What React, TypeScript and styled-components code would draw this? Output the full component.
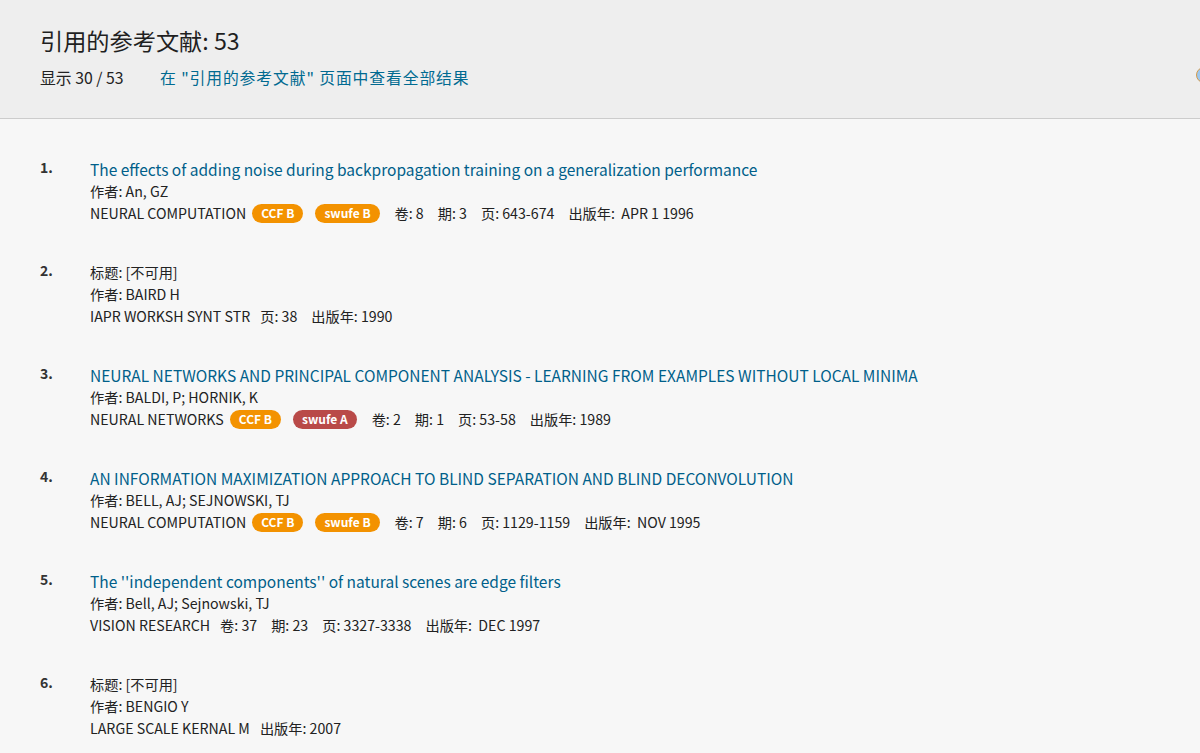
import React from "react";
import styled, { createGlobalStyle } from "styled-components";

const Global = createGlobalStyle`
  html, body { margin: 0; padding: 0; background: #f7f7f7; overflow: hidden; }
  body { font-family: "Noto Sans CJK SC", "Noto Sans", sans-serif; color: #222; }
`;

const Header = styled.header`
  position: relative;
  background: #eeeeee;
  border-bottom: 1px solid #cccccc;
  padding: 25px 40px 0;
  height: 119px;
  box-sizing: border-box;
`;

const Title = styled.h1`
  margin: 0;
  font-size: 23.2px;
  font-weight: 400;
  line-height: 30px;
  color: #1f1f1f;
`;

const SubRow = styled.div`
  display: flex;
  align-items: center;
  margin-top: 12px;
  font-size: 15.8px;
  line-height: 22px;
`;

const Count = styled.span`
  color: #222;
  width: 120px;
`;

const Link = styled.a`
  color: #006a91;
  text-decoration: none;
  cursor: pointer;
  letter-spacing: 0.9px;
`;

const EdgeIcon = styled.span`
  position: absolute;
  right: -12px;
  top: 67px;
  width: 14px;
  height: 14px;
  border-radius: 50%;
  border: 1px solid #d49a4a;
  background: #9cc8f0;
`;

const List = styled.ol`
  list-style: none;
  margin: 0;
  padding: 39px 40px 0;
  display: flex;
  flex-direction: column;
  gap: 37px;
`;

const Item = styled.li`
  display: grid;
  grid-template-columns: 50px 1fr;
`;

const Num = styled.span`
  font-size: 14px;
  font-weight: 700;
  color: #333;
  line-height: 18px;
`;

const Body = styled.div`
  display: flex;
  flex-direction: column;
`;

const RefTitle = styled.a`
  font-size: 15.5px;
  line-height: 22px;
  color: #005f8a;
  text-decoration: none;
  cursor: pointer;
`;

const Line = styled.div`
  display: flex;
  align-items: center;
  font-size: 14.2px;
  line-height: 22px;
  color: #222;
  white-space: pre;
`;

const Badge = styled.span<{ $tone: "orange" | "red" }>`
  display: inline-flex;
  align-items: center;
  justify-content: center;
  height: 19px;
  padding: 0 9px;
  border-radius: 10px;
  background: ${(p) => (p.$tone === "red" ? "#b94a48" : "#f39200")};
  color: #fff;
  font-size: 12px;
  font-weight: 700;
  margin-left: 6px;
  & + & { margin-left: 12px; }
`;

const Field = styled.span<{ $gap: number }>`
  margin-left: ${(p) => p.$gap}px;
`;

type Ref = {
  title?: string;
  authors: string;
  journal: string;
  badges?: { text: string; tone: "orange" | "red" }[];
  fields: string[];
};

const refs: Ref[] = [
  {
    title: "The effects of adding noise during backpropagation training on a generalization performance",
    authors: "An, GZ",
    journal: "NEURAL COMPUTATION",
    badges: [
      { text: "CCF B", tone: "orange" },
      { text: "swufe B", tone: "orange" },
    ],
    fields: ["卷: 8", "期: 3", "页: 643-674", "出版年:  APR 1 1996"],
  },
  {
    authors: "BAIRD H",
    journal: "IAPR WORKSH SYNT STR",
    fields: ["页: 38", "出版年: 1990"],
  },
  {
    title: "NEURAL NETWORKS AND PRINCIPAL COMPONENT ANALYSIS - LEARNING FROM EXAMPLES WITHOUT LOCAL MINIMA",
    authors: "BALDI, P; HORNIK, K",
    journal: "NEURAL NETWORKS",
    badges: [
      { text: "CCF B", tone: "orange" },
      { text: "swufe A", tone: "red" },
    ],
    fields: ["卷: 2", "期: 1", "页: 53-58", "出版年: 1989"],
  },
  {
    title: "AN INFORMATION MAXIMIZATION APPROACH TO BLIND SEPARATION AND BLIND DECONVOLUTION",
    authors: "BELL, AJ; SEJNOWSKI, TJ",
    journal: "NEURAL COMPUTATION",
    badges: [
      { text: "CCF B", tone: "orange" },
      { text: "swufe B", tone: "orange" },
    ],
    fields: ["卷: 7", "期: 6", "页: 1129-1159", "出版年:  NOV 1995"],
  },
  {
    title: "The ''independent components'' of natural scenes are edge filters",
    authors: "Bell, AJ; Sejnowski, TJ",
    journal: "VISION RESEARCH",
    fields: ["卷: 37", "期: 23", "页: 3327-3338", "出版年:  DEC 1997"],
  },
  {
    authors: "BENGIO Y",
    journal: "LARGE SCALE KERNAL M",
    fields: ["出版年: 2007"],
  },
];

export default function App() {
  return (
    <>
      <Global />
      <Header>
        <Title>引用的参考文献: 53</Title>
        <SubRow>
          <Count>显示 30 / 53</Count>
          <Link>在 "引用的参考文献" 页面中查看全部结果</Link>
        </SubRow>
        <EdgeIcon />
      </Header>
      <List>
        {refs.map((r, i) => (
          <Item key={i}>
            <Num>{i + 1}.</Num>
            <Body>
              {r.title ? <RefTitle>{r.title}</RefTitle> : <Line>标题: [不可用]</Line>}
              <Line>作者: {r.authors}</Line>
              <Line>
                <span>{r.journal}</span>
                {r.badges?.map((b) => (
                  <Badge key={b.text} $tone={b.tone}>
                    {b.text}
                  </Badge>
                ))}
                {r.fields.map((f, j) => (
                  <Field key={j} $gap={j > 0 ? 14 : r.badges ? 15 : 10}>
                    {f}
                  </Field>
                ))}
              </Line>
            </Body>
          </Item>
        ))}
      </List>
    </>
  );
}
